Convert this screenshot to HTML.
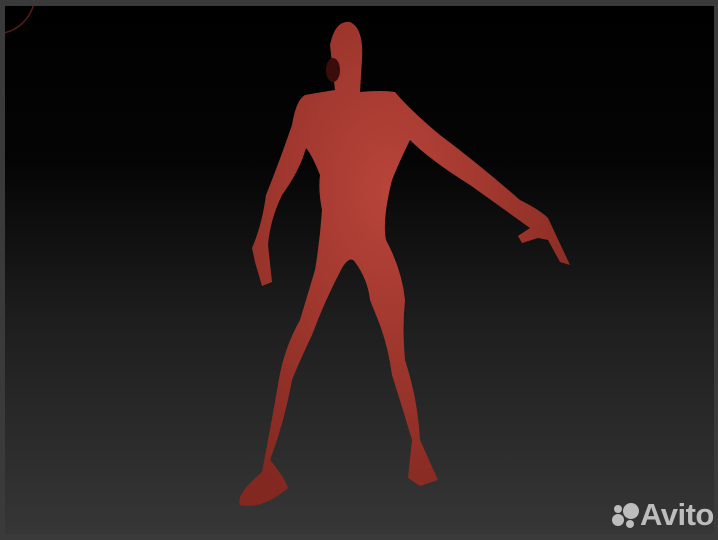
<!DOCTYPE html>
<html><head><style>
html,body{margin:0;padding:0;width:718px;height:540px;overflow:hidden;background:#3a3a3a}
.v{position:absolute;left:5px;top:6px;width:709px;height:528px;background:linear-gradient(#000 0%,#050505 30%,#1e1e1e 60%,#363636 100%);overflow:hidden}
.logo{position:absolute;left:640px;top:497px;font:bold 31px "Liberation Sans",sans-serif;color:#bdbdbd;letter-spacing:-0.5px}
</style></head><body>
<div class="v">
<svg width="709" height="528" style="position:absolute;left:0;top:0">
<defs><radialGradient id="g" cx="0.45" cy="0.35" r="0.7"><stop offset="0" stop-color="#b8443a"/><stop offset="1" stop-color="#822820"/></radialGradient></defs>
<circle cx="-10" cy="-12" r="40" fill="none" stroke="#5a1a1a" stroke-width="1.5"/>
<g fill="url(#g)" transform="translate(-5,-6)">
<path d="M330 45 Q335 20 350 22 Q364 28 362 60 L360 92 Q380 90 395 92 Q410 110 440 135 Q480 165 520 200 Q540 210 548 218 L570 265 L560 262 L548 240 L538 238 L522 243 L518 236 L530 228 Q505 210 470 185 Q430 160 410 140 Q400 160 392 180 Q382 220 386 240 Q402 270 405 300 Q402 330 405 360 Q418 400 420 440 L438 480 L420 486 L408 478 L412 440 Q400 400 392 375 Q388 345 378 320 L370 300 Q368 280 355 262 Q350 255 342 268 Q325 300 312 335 Q300 360 292 380 Q285 420 270 460 Q283 475 288 488 Q262 510 240 505 Q235 495 262 472 Q270 430 278 385 Q283 350 300 320 L315 270 Q320 240 322 210 Q318 190 320 175 Q312 155 306 148 Q300 170 282 195 Q270 220 268 245 L272 282 L262 286 L255 262 L252 248 Q262 225 266 195 Q280 160 292 125 Q296 100 305 95 Q322 92 335 90 Z"/>
</g>
<ellipse cx="328" cy="64" rx="7" ry="12" fill="#3a0d0a"/>
</svg>
</div>
<svg style="position:absolute;left:611px;top:501px" width="30" height="28">
<circle cx="20" cy="10" r="8" fill="#bdbdbd"/><circle cx="7" cy="8" r="4" fill="#bdbdbd"/><circle cx="7" cy="19" r="6" fill="#bdbdbd"/><circle cx="19" cy="23" r="4" fill="#bdbdbd"/>
</svg>
<div class="logo">Avito</div>
</body></html>
